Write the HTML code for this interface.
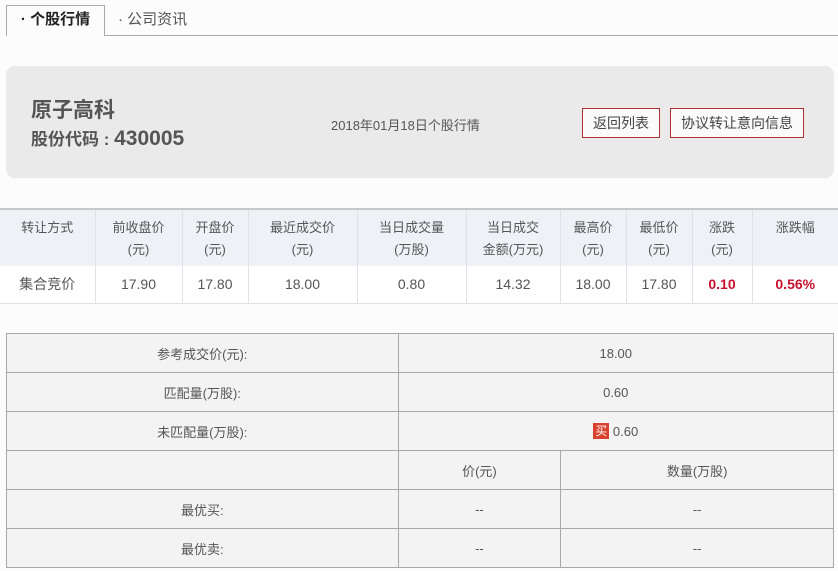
<!DOCTYPE html>
<html><head><meta charset="utf-8"><style>
*{margin:0;padding:0;box-sizing:border-box}
body{width:838px;height:571px;background:#fcfcfc;font-family:"Liberation Sans","Noto Sans CJK SC",sans-serif;color:#555;position:relative;overflow:hidden;font-size:13px}
.abs{position:absolute}
.tabline{left:6px;right:0;top:35px;height:1px;background:#aaa}
.tab1{left:6px;top:5px;width:99px;height:31px;border:1px solid #aaa;border-bottom:none;background:#fcfcfc;font-size:15px;font-weight:bold;color:#222;text-align:center;line-height:28px}
.tab2{left:118px;top:5px;height:30px;font-size:15px;color:#555;line-height:30px}
.box{left:6px;top:66px;width:828px;height:112px;background:#ebeaeb;border-radius:9px}
.btn{top:108px;height:30px;border:1px solid #b03030;background:#fafafa;font-size:14px;color:#444;line-height:28px;text-align:center}
table{border-collapse:collapse;position:absolute}
.t1{left:0;top:208px;width:838px;border-top:2px solid #c8c8c8}
.t1 td{border-left:1px solid #dfe3e8;text-align:center;color:#555;font-size:13px}
.t1 td:first-child{border-left:none}
.t1 .h td{background:#eef2f7;height:57px;line-height:22px;padding-top:2px}
.t1 .d td{background:#fff;height:37px;font-size:14px;border-bottom:1px solid #dfe3e8}
.t1 .d td.red{color:#c8102e;font-weight:bold}
.t2{left:6px;top:333px;width:828px}
.t2 td{border:1px solid #a8a8a8;background:#f3f3f4;height:39px;text-align:center;font-size:13px;color:#555}
</style></head><body>
<div class="abs tabline"></div>
<div class="abs tab1">· 个股行情</div>
<div class="abs tab2">· 公司资讯</div>
<div class="abs box"></div>
<div class="abs" style="left:31px;top:94px;font-size:21px;font-weight:bold;color:#555">原子高科</div>
<div class="abs" style="left:31px;top:125px;font-size:17px;font-weight:bold;color:#555">股份代码 : <span style="font-size:21px">430005</span></div>
<div class="abs" style="left:331px;top:115px;font-size:13px;color:#555">2018年01月18日个股行情</div>
<div class="abs btn" style="left:582px;width:78px">返回列表</div>
<div class="abs btn" style="left:670px;width:134px">协议转让意向信息</div>
<table class="t1">
<colgroup><col style="width:95px"><col style="width:87px"><col style="width:66px"><col style="width:109px"><col style="width:109px"><col style="width:94px"><col style="width:66px"><col style="width:66px"><col style="width:60px"><col style="width:86px"></colgroup>
<tr class="h"><td>转让方式<br>&nbsp;</td><td>前收盘价<br>(元)</td><td>开盘价<br>(元)</td><td>最近成交价<br>(元)</td><td>当日成交量<br>(万股)</td><td>当日成交<br>金额(万元)</td><td>最高价<br>(元)</td><td>最低价<br>(元)</td><td>涨跌<br>(元)</td><td>涨跌幅<br>&nbsp;</td></tr>
<tr class="d"><td>集合竞价</td><td>17.90</td><td>17.80</td><td>18.00</td><td>0.80</td><td>14.32</td><td>18.00</td><td>17.80</td><td class="red">0.10</td><td class="red">0.56%</td></tr>
</table>
<table class="t2">
<colgroup><col style="width:392px"><col style="width:163px"><col style="width:273px"></colgroup>
<tr><td>参考成交价(元):</td><td colspan="2">18.00</td></tr>
<tr><td>匹配量(万股):</td><td colspan="2">0.60</td></tr>
<tr><td>未匹配量(万股):</td><td colspan="2"><span style="display:inline-block;width:16px;height:16px;background:#d9412e;color:#fff;font-size:12px;line-height:16px;vertical-align:middle">买</span> <span style="vertical-align:middle">0.60</span></td></tr>
<tr><td></td><td>价(元)</td><td>数量(万股)</td></tr>
<tr><td>最优买:</td><td>--</td><td>--</td></tr>
<tr><td>最优卖:</td><td>--</td><td>--</td></tr>
</table>
</body></html>
